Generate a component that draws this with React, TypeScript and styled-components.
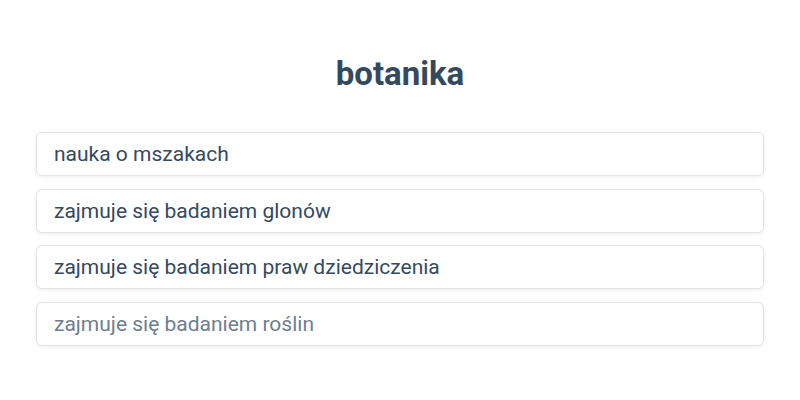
import React from "react";
import styled, { createGlobalStyle } from "styled-components";

const Global = createGlobalStyle`
  html, body { margin: 0; padding: 0; background: #ffffff; }
  body { font-family: Roboto, "Noto Sans", sans-serif; }
`;

const Page = styled.div`
  width: 800px;
  height: 400px;
  box-sizing: border-box;
  padding: 52px 36px 0;
  display: flex;
  flex-direction: column;
`;

const Title = styled.h1`
  margin: 0 0 36px;
  text-align: center;
  font-size: 33px;
  line-height: 44px;
  font-weight: 700;
  color: #34495e;
`;

const List = styled.div`
  display: flex;
  flex-direction: column;
  gap: 12.5px;
`;

const Option = styled.div<{ $faded?: boolean }>`
  height: 44px;
  box-sizing: border-box;
  display: flex;
  align-items: center;
  padding: 0 17px;
  border: 1px solid #e4e4e4;
  border-radius: 6px;
  background: #ffffff;
  box-shadow: 0 1px 4px rgba(0, 0, 0, 0.08);
  font-size: 21px;
  color: ${(p) => (p.$faded ? "#6f7e8e" : "#35495e")};
`;

const options = [
  "nauka o mszakach",
  "zajmuje się badaniem glonów",
  "zajmuje się badaniem praw dziedziczenia",
  "zajmuje się badaniem roślin",
];

export default function App() {
  return (
    <>
      <Global />
      <Page>
        <Title>botanika</Title>
        <List>
          {options.map((o, i) => (
            <Option key={o} $faded={i === 3}>
              {o}
            </Option>
          ))}
        </List>
      </Page>
    </>
  );
}
